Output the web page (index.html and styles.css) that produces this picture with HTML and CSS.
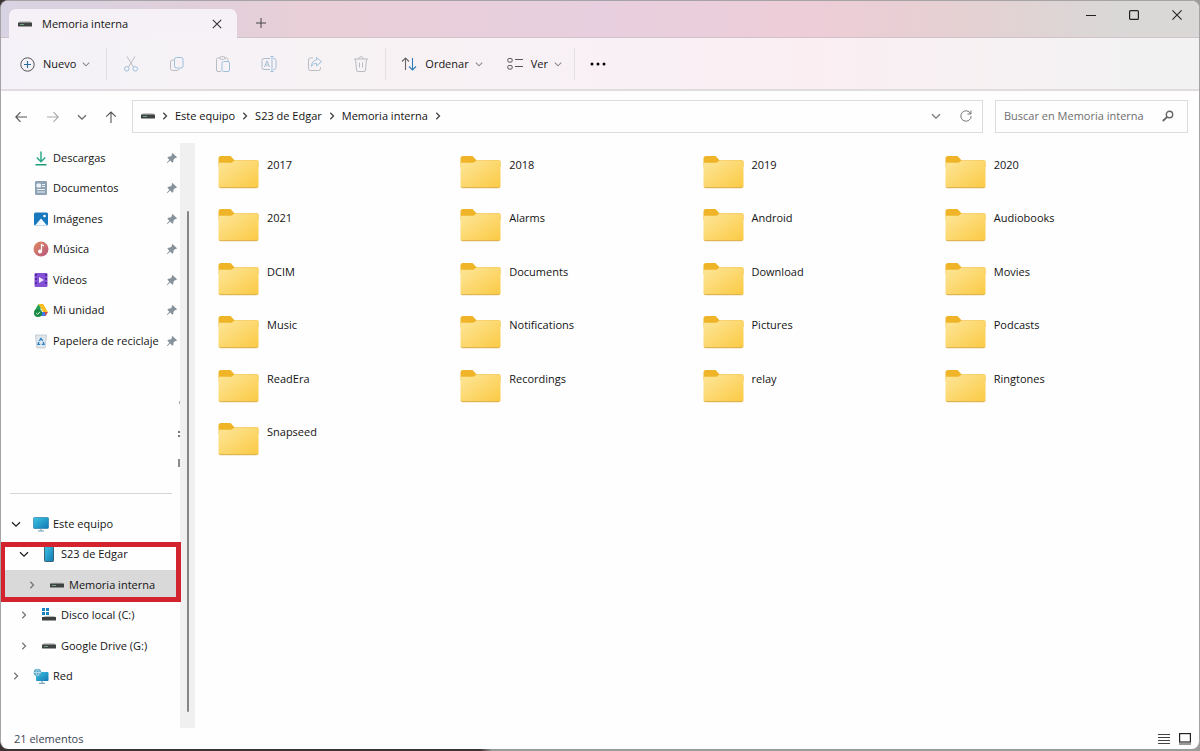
FILE: index.html
```html
<!DOCTYPE html>
<html lang="es">
<head>
<meta charset="utf-8">
<title>Memoria interna</title>
<link rel="stylesheet" href="styles.css">
</head>
<body>
<svg class="defs" aria-hidden="true">
  <defs>
    <linearGradient id="g-folder" x1="0" y1="0" x2="1" y2="1"><stop offset="0" stop-color="#fde69a"/><stop offset="1" stop-color="#fbca44"/></linearGradient>
    <linearGradient id="g-screen" x1="0" y1="0" x2="1" y2="1"><stop offset="0" stop-color="#3cc5e2"/><stop offset="1" stop-color="#1278b4"/></linearGradient>
    <linearGradient id="g-music" x1="0" y1="0" x2="1" y2="1"><stop offset="0" stop-color="#e08a60"/><stop offset="1" stop-color="#b8557e"/></linearGradient>
    <symbol id="folder" viewBox="0 0 41 34"><path d="M.5 3.500a2.500 2.500 0 0 1 2.500-2.500h9.500l4 4.200h22.500a1.500 1.500 0 0 1 1.500 1.500V12H.5z" fill="#efb427"/><path d="M.5 9a1.200 1.200 0 0 1 1.200-1.200H13c1.500 0 2.500-2.400 4-2.400h22a1.500 1.500 0 0 1 1.500 1.500V31a1.500 1.500 0 0 1-1.500 1.500H2A1.500 1.500 0 0 1 .5 31z" fill="url(#g-folder)"/><path d="M1 31.800q.4.900 1.500.9h36q1 0 1.400-.9" fill="none" stroke="#d9a83a"/></symbol>
    <symbol id="drive" viewBox="0 0 14 6"><path d="M2 0h10l2 2H0z" fill="#c9c9c9"/><rect y="1.500" width="14" height="4" rx=".6" fill="#3f4341"/><path d="M2 3.500h4" stroke="#6fa383"/></symbol>
    <symbol id="pin" viewBox="0 0 12 12"><path d="M6.500 1 11 5.300 9.800 6.200 9 6 7.500 7.800 7.300 10 6.300 10.700 4.200 8.600 1.200 11.200.8 10.800 3.400 7.800 1.400 5.700 2.200 4.800 4.400 4.600 6 3 5.700 1.800z" fill="#87929b"/></symbol>
    <symbol id="right" viewBox="0 0 8 8"><path d="M2.300.8 5.500 4 2.300 7.200" fill="none" stroke="currentColor" stroke-width="1.300"/></symbol>
    <symbol id="down" viewBox="0 0 10 10"><path d="M1 3.200 5 7.200 9 3.200" fill="none" stroke="currentColor" stroke-width="1.300"/></symbol>
  </defs>
</svg>
<div class="window">
  <header class="titlebar">
    <div class="tab">
      <svg class="i14x6"><use href="#drive"/></svg>
      <span class="tab-title">Memoria interna</span>
      <button class="icon-btn" aria-label="Cerrar pestaña"><svg width="10" height="10" viewBox="0 0 10 10"><path d="M.8.8l8.400 8.400M9.200.8.8 9.200" stroke="#333" stroke-width="1.100"/></svg></button>
    </div>
    <button class="icon-btn new-tab" aria-label="Nueva pestaña"><svg width="10" height="10" viewBox="0 0 10 10"><path d="M5 0v10M0 5h10" stroke="#444"/></svg></button>
    <div class="window-controls">
      <button class="icon-btn" aria-label="Minimizar"><svg width="10" height="10" viewBox="0 0 10 10"><path d="M0 5.500h10" stroke="#222"/></svg></button>
      <button class="icon-btn" aria-label="Maximizar"><svg width="10" height="10" viewBox="0 0 10 10"><rect x=".6" y=".6" width="8.800" height="8.800" rx="1" fill="none" stroke="#222" stroke-width="1.200"/></svg></button>
      <button class="icon-btn" aria-label="Cerrar"><svg width="10" height="10" viewBox="0 0 10 10"><path d="M.4.4l9.200 9.200M9.600.4.400 9.600" stroke="#222" stroke-width="1.100"/></svg></button>
    </div>
  </header>

  <div class="toolbar">
    <button class="tool new"><svg width="15" height="15" viewBox="0 0 15 15" fill="none"><circle cx="7.500" cy="7.500" r="6.700" stroke="#555"/><path d="M7.500 4v7M4 7.500h7" stroke="#2c6a9a" stroke-width="1.100"/></svg><span>Nuevo</span><svg class="chev"><use href="#down"/></svg></button>
    <div class="tools">
      <button class="icon-btn" aria-label="Cortar"><svg width="16" height="16" viewBox="0 0 16 16" fill="none"><path d="M4 .5l6.500 10.500M12 .5 5.500 11" stroke="#b9bcc3"/><circle cx="3.800" cy="12.800" r="2.300" stroke="#9dc0dd"/><circle cx="12.200" cy="12.800" r="2.300" stroke="#9dc0dd"/></svg></button>
      <button class="icon-btn" aria-label="Copiar"><svg width="16" height="16" viewBox="0 0 16 16" fill="none"><path d="M5 4H3.500A2 2 0 0 0 1.500 6v6.500a2 2 0 0 0 2 2H8a2 2 0 0 0 2-1.500" stroke="#b9bcc3"/><rect x="5.500" y="1.500" width="8.500" height="10.500" rx="2" stroke="#9dc0dd"/></svg></button>
      <button class="icon-btn" aria-label="Pegar"><svg width="16" height="16" viewBox="0 0 16 16" fill="none"><path d="M5 2H3a1.500 1.500 0 0 0-1.500 1.500V14A1.500 1.500 0 0 0 3 15.500h3M10 2h1.500A1.500 1.500 0 0 1 13 3.500V5" stroke="#b9bcc3"/><rect x="5" y=".6" width="5" height="2.800" rx="1.400" stroke="#b9bcc3"/><rect x="7" y="5.500" width="7.500" height="10" rx="1.500" stroke="#9dc0dd"/></svg></button>
      <button class="icon-btn" aria-label="Cambiar nombre"><svg width="16" height="16" viewBox="0 0 16 16" fill="none"><path d="M9 2.500H3a2 2 0 0 0-2 2v7a2 2 0 0 0 2 2h6M12.500 2.500h.5a2 2 0 0 1 2 2v7a2 2 0 0 1-2 2h-.5M3.500 11 6 4.800 8.500 11M4.500 9h3" stroke="#a9bed2"/><path d="M9.500.5h3M11 .5v15M9.500 15.500h3" stroke="#9dc0dd"/></svg></button>
      <button class="icon-btn" aria-label="Compartir"><svg width="16" height="16" viewBox="0 0 16 16" fill="none"><path d="M6 2H3.500a2 2 0 0 0-2 2v8.500a2 2 0 0 0 2 2h8a2 2 0 0 0 2-2V11" stroke="#b9bcc3"/><path d="M9.500 1.500l5 4.200-5 4.200V7.500C7 7.300 5.500 8.300 4.500 10.500c0-4 2-6.200 5-6.500z" stroke="#9dc0dd" stroke-linejoin="round"/></svg></button>
      <button class="icon-btn" aria-label="Eliminar"><svg width="16" height="16" viewBox="0 0 16 16" fill="none"><path d="M1 3h14M5.500 3c0-3 5-3 5 0M2.500 3l1 11a1.500 1.500 0 0 0 1.500 1.500h6a1.500 1.500 0 0 0 1.500-1.500l1-11M6.500 6.500v5M9.500 6.500v5" stroke="#b9bcc3"/></svg></button>
    </div>
    <button class="tool sort"><svg width="16" height="14" viewBox="0 0 16 14" fill="none"><path d="M4.500 13V1M1 4.500 4.500 1 8 4.500" stroke="#666" stroke-width="1.100"/><path d="M11.500 1v12M8 9.500l3.500 3.500L15 9.500" stroke="#2e7db8" stroke-width="1.100"/></svg><span>Ordenar</span><svg class="chev"><use href="#down"/></svg></button>
    <button class="tool"><svg width="16" height="14" viewBox="0 0 16 14" fill="none" stroke="#555"><rect x=".8" y="1.500" width="4.400" height="3.600" rx="1.300"/><rect x=".8" y="8.500" width="4.400" height="3.600" rx="1.300"/><path d="M8 2.500h8M8 9.500h8"/></svg><span>Ver</span><svg class="chev"><use href="#down"/></svg></button>
    <button class="icon-btn more" aria-label="Ver más"><svg width="16" height="4" viewBox="0 0 16 4"><circle cx="2" cy="2" r="1.500"/><circle cx="8" cy="2" r="1.500"/><circle cx="14" cy="2" r="1.500"/></svg></button>
  </div>

  <div class="navbar">
    <div class="history">
      <button class="icon-btn" aria-label="Atrás"><svg width="12" height="12" viewBox="0 0 12 12" fill="none"><path d="M12 6H1M5.500 1.200.8 6l4.700 4.800" stroke="#555" stroke-width="1.100"/></svg></button>
      <button class="icon-btn" aria-label="Adelante"><svg width="12" height="12" viewBox="0 0 12 12" fill="none"><path d="M0 6h11M6.500 1.200 11.200 6l-4.700 4.800" stroke="#aaa" stroke-width="1.100"/></svg></button>
      <button class="icon-btn" aria-label="Recientes"><svg width="10" height="10" color="#666"><use href="#down"/></svg></button>
      <button class="icon-btn" aria-label="Subir"><svg width="12" height="12" viewBox="0 0 12 12" fill="none"><path d="M6 12V1M1.200 5.700 6 1l4.800 4.700" stroke="#555" stroke-width="1.100"/></svg></button>
    </div>
    <nav class="address" aria-label="Ruta">
      <svg class="i14x6"><use href="#drive"/></svg>
      <svg class="sep"><use href="#right"/></svg>
      <a href="#">Este equipo</a>
      <svg class="sep"><use href="#right"/></svg>
      <a href="#">S23 de Edgar</a>
      <svg class="sep"><use href="#right"/></svg>
      <a href="#">Memoria interna</a>
      <svg class="sep"><use href="#right"/></svg>
      <button class="icon-btn drop" aria-label="Ubicaciones anteriores"><svg width="10" height="10" color="#777"><use href="#down"/></svg></button>
      <button class="icon-btn" aria-label="Actualizar"><svg width="12" height="12" viewBox="0 0 12 12" fill="none" stroke="#777"><path d="M10.800 4A5.200 5.200 0 1 0 11.200 6M11 .5V4H7.500"/></svg></button>
    </nav>
    <label class="search">
      <input type="text" placeholder="Buscar en Memoria interna" aria-label="Buscar en Memoria interna">
      <svg width="12" height="12" viewBox="0 0 12 12" fill="none" stroke="#666"><circle cx="7.500" cy="4.500" r="3.200" stroke-width="1.400"/><path d="M5.200 6.800.8 11" stroke-width="1.800"/></svg>
    </label>
  </div>

  <div class="content">
    <aside class="sidebar">
      <ul class="rows quick">
        <li><svg class="ico" viewBox="0 0 16 16" fill="none"><path d="M8 1.500v10M3.800 7.500 8 11.700l4.200-4.200" stroke="#2aa889" stroke-width="1.500"/><path d="M2.500 14.700h11" stroke="#1e9a7d" stroke-width="1.600"/></svg><a href="#">Descargas</a><svg class="pin"><use href="#pin"/></svg></li>
        <li><svg class="ico" viewBox="0 0 16 16"><rect x="2" y="1" width="12" height="14" rx="1.200" fill="#8fa2b4"/><path d="M4 4h3.500v3H4zM4 9.500h8M4 12h8M9 4.500h3M9 6.500h3" fill="#edf3f8" stroke="#edf3f8"/></svg><a href="#">Documentos</a><svg class="pin"><use href="#pin"/></svg></li>
        <li><svg class="ico" viewBox="0 0 16 16"><rect x="1" y="1.500" width="14" height="13" rx="1.500" fill="#1778be"/><path d="M2 14.500 8 7.500l6 7z" fill="#f4faff"/><circle cx="11.500" cy="5" r="1.300" fill="#fff"/></svg><a href="#">Imágenes</a><svg class="pin"><use href="#pin"/></svg></li>
        <li><svg class="ico" viewBox="0 0 16 16"><circle cx="8" cy="8" r="7.500" fill="url(#g-music)"/><circle cx="7" cy="10.500" r="2" fill="#fff"/><path d="M8.500 10.500V3.500l2.500 1.500" fill="none" stroke="#fff" stroke-width="1.200"/></svg><a href="#">Música</a><svg class="pin"><use href="#pin"/></svg></li>
        <li><svg class="ico" viewBox="0 0 16 16"><rect x="1.500" y="1" width="13" height="14" rx="1.200" fill="#8450d6"/><path d="M3 2v12M13 2v12" stroke="#41208c" stroke-width="1.500" stroke-dasharray="2 2"/><path d="M6 5v6l5-3z" fill="#f0e5ff"/></svg><a href="#">Vídeos</a><svg class="pin"><use href="#pin"/></svg></li>
        <li><svg class="ico" viewBox="0 0 16 16"><path d="M5.500 2 1.200 9.500l2.200 4L8 6z" fill="#21a05a"/><path d="M5.500 2h4.700l4.600 8h-4.600z" fill="#f8bd21"/><path d="M7 10h7.800l-2.300 4H5z" fill="#3c7be0"/><path d="M12.500 14l2.300-4h-3z" fill="#e34a3c"/><circle cx="5" cy="11" r="4" fill="#188a42"/><path d="M3.200 11l1.500 1.400L7 9.700" fill="none" stroke="#dff5e5"/></svg><a href="#">Mi unidad</a><svg class="pin"><use href="#pin"/></svg></li>
        <li><svg class="ico" viewBox="0 0 16 16"><path d="M2.500 2h11l-1.300 13H3.800z" fill="#dfe6ec" stroke="#b5c0c9" stroke-width=".7"/><path d="M6.300 8 8 5.500 9.700 8M10.300 9l.7 2.300H8.800M7.200 11.300H5l.8-2.300" fill="none" stroke="#2682c8" stroke-width="1.300"/></svg><a href="#">Papelera de reciclaje</a><svg class="pin"><use href="#pin"/></svg></li>
      </ul>
      <div class="rows clipped" aria-hidden="true">
        <div></div>
        <div><svg width="2" height="10"><path d="M1.500 4v3" stroke="#aaa"/></svg></div>
        <div><svg width="2" height="10"><path d="M1 4v2M1 8v2" stroke="#777" stroke-width="2"/></svg></div>
        <div><svg width="2" height="10"><path d="M1 1v8" stroke="#666" stroke-width="1.500"/></svg></div>
      </div>
      <hr>
      <ul class="rows tree">
        <li><svg class="arrow open"><use href="#down"/></svg><svg class="ico" viewBox="0 0 16 16"><rect x=".5" y="1.500" width="15" height="11" rx="1" fill="url(#g-screen)" stroke="#2a7fa8" stroke-width=".7"/><path d="M8 12.500V15M5 15h6" stroke="#6f9eb6"/></svg><a href="#">Este equipo</a></li>
        <li class="level1 highlight"><svg class="arrow open"><use href="#down"/></svg><svg class="ico" viewBox="0 0 16 16"><rect x="3.500" y=".5" width="9" height="15" rx=".8" fill="url(#g-screen)" stroke="#33546a" stroke-width=".9"/></svg><a href="#">S23 de Edgar</a></li>
        <li class="level2 selected"><svg class="arrow"><use href="#right"/></svg><svg class="ico" viewBox="-1 -5 16 16"><use href="#drive" width="14" height="6"/></svg><a href="#">Memoria interna</a></li>
        <li class="level1"><svg class="arrow"><use href="#right"/></svg><svg class="ico" viewBox="0 0 16 16"><path d="M1 1h3v3H1zM5 1h3v3H5zM1 5h3v3H1zM5 5h3v3H5z" fill="#1a83c4"/><path d="M4 9h9l2 1.500H2z" fill="#bbb"/><rect x="1" y="10" width="14" height="3.500" fill="#3c403f"/></svg><a href="#">Disco local (C:)</a></li>
        <li class="level1"><svg class="arrow"><use href="#right"/></svg><svg class="ico" viewBox="-1 -5 16 16"><use href="#drive" width="14" height="6"/></svg><a href="#">Google Drive (G:)</a></li>
        <li><svg class="arrow"><use href="#right"/></svg><svg class="ico" viewBox="0 0 16 16"><rect x="3" y="4" width="12.500" height="9" rx=".8" fill="url(#g-screen)"/><path d="M9 13v2M6 15.300h6" stroke="#5f94b0"/><circle cx="4.500" cy="4.500" r="3.800" fill="#5aa9c9"/><path d="M1 4.500h7M4.500 1c-2 2-2 5 0 7M4.500 1c2 2 2 5 0 7" fill="none" stroke="#d3edf5" stroke-width=".7"/></svg><a href="#">Red</a></li>
      </ul>
    </aside>
    <div class="scrollbar"><div class="thumb"></div></div>
    <main class="files">
      <a href="#"><svg><use href="#folder"/></svg><span>2017</span></a>
      <a href="#"><svg><use href="#folder"/></svg><span>2018</span></a>
      <a href="#"><svg><use href="#folder"/></svg><span>2019</span></a>
      <a href="#"><svg><use href="#folder"/></svg><span>2020</span></a>
      <a href="#"><svg><use href="#folder"/></svg><span>2021</span></a>
      <a href="#"><svg><use href="#folder"/></svg><span>Alarms</span></a>
      <a href="#"><svg><use href="#folder"/></svg><span>Android</span></a>
      <a href="#"><svg><use href="#folder"/></svg><span>Audiobooks</span></a>
      <a href="#"><svg><use href="#folder"/></svg><span>DCIM</span></a>
      <a href="#"><svg><use href="#folder"/></svg><span>Documents</span></a>
      <a href="#"><svg><use href="#folder"/></svg><span>Download</span></a>
      <a href="#"><svg><use href="#folder"/></svg><span>Movies</span></a>
      <a href="#"><svg><use href="#folder"/></svg><span>Music</span></a>
      <a href="#"><svg><use href="#folder"/></svg><span>Notifications</span></a>
      <a href="#"><svg><use href="#folder"/></svg><span>Pictures</span></a>
      <a href="#"><svg><use href="#folder"/></svg><span>Podcasts</span></a>
      <a href="#"><svg><use href="#folder"/></svg><span>ReadEra</span></a>
      <a href="#"><svg><use href="#folder"/></svg><span>Recordings</span></a>
      <a href="#"><svg><use href="#folder"/></svg><span>relay</span></a>
      <a href="#"><svg><use href="#folder"/></svg><span>Ringtones</span></a>
      <a href="#"><svg><use href="#folder"/></svg><span>Snapseed</span></a>
    </main>
  </div>

  <footer class="status">
    <span>21 elementos</span>
    <div class="views">
      <button class="icon-btn" aria-label="Detalles"><svg width="12" height="12" viewBox="0 0 12 12"><path d="M0 1.500h12M0 4.500h12M0 7.500h12M0 10.500h12" stroke="#444"/></svg></button>
      <button class="icon-btn" aria-label="Iconos grandes"><svg width="12" height="12" viewBox="0 0 12 12"><rect x=".6" y=".6" width="10.800" height="8.400" fill="#fff" stroke="#222" stroke-width="1.200"/><path d="M0 11h12" stroke="#777" stroke-width="1.500"/></svg></button>
    </div>
  </footer>
</div>
</body>
</html>
```
FILE: styles.css
```css
* { box-sizing: border-box; }

body {
  margin: 0;
  min-height: 100vh;
  display: flex;
  padding-bottom: 2px;
  background: linear-gradient(90deg, #3a3233 40%, #9c9a9a 41%);
  font: 11px/16px "Open Sans", "Noto Sans", sans-serif;
  color: #141414;
}

a { color: inherit; text-decoration: none; white-space: nowrap; }
ul { list-style: none; margin: 0; padding: 0; }
svg { display: block; flex: none; }
.defs { position: absolute; width: 0; height: 0; }

button {
  display: flex;
  align-items: center;
  justify-content: center;
  padding: 0;
  border: 0;
  background: none;
  font: inherit;
  color: inherit;
}

.icon-btn { width: 24px; height: 24px; flex: none; }
.i14x6 { width: 14px; height: 6px; }

.window {
  flex: 1;
  display: flex;
  flex-direction: column;
  background: #fefefe;
  border: 1px solid #a5a3a5;
  border-bottom: 0;
  border-radius: 8px;
  overflow: hidden;
}

.titlebar {
  display: flex;
  align-items: flex-end;
  height: 37px;
  padding-left: 8px;
  background: linear-gradient(90deg, #d8d3e2 0%, #e0cfdb 16%, #e9cfd7 26%, #e8cfdf 50%, #edcdd7 68%, #e5d0d2 80%, #d9d8d7 94%);
  box-shadow: inset 0 -1px #d2c3cb;
}

.tab {
  display: flex;
  align-items: center;
  width: 228px;
  height: 29px;
  padding: 0 8px 0 9px;
  gap: 10px;
  border-radius: 7px 7px 0 0;
  background: #f5f1f6;
}

.tab-title { flex: 1; }
.new-tab { margin: 0 0 3px 12px; }
.window-controls { display: flex; gap: 19px; margin: 0 10px 11px auto; }

.toolbar {
  display: flex;
  align-items: center;
  height: 53px;
  padding: 1px 0 0 19px;
  background: linear-gradient(90deg, #f4f2f8 0%, #f7f2f4 28%, #f8f0f5 50%, #faeef2 68%, #f6f1f2 84%, #f3f2f2 94%);
  border-bottom: 2px solid #e1dcdf;
}

.tool { height: 32px; gap: 6px; margin-right: 24px; }
.tool span { margin-left: 2px; }
.chev { width: 8px; height: 8px; color: #888; }
.new { margin-right: 16px; }
.sort { margin-left: 15px; }

.tools {
  display: flex;
  align-items: center;
  gap: 22px;
  height: 32px;
  padding: 0 12px;
  border: solid #e4dfe3;
  border-width: 0 1px;
}

.more { width: 48px; height: 32px; margin-left: -12px; border-left: 1px solid #e4dfe3; }

.navbar { display: flex; align-items: center; gap: 12px; padding: 9px 11px 10px 8px; }
.history { display: flex; gap: 5px; width: 111px; }
.history > :first-child { margin-right: 3px; }

.address, .search {
  display: flex;
  align-items: center;
  height: 33px;
  padding-bottom: 1px;
  border: 1px solid #dcdcdc;
}

.address { flex: 1; padding-left: 8px; padding-right: 4px; gap: 6px; }
.sep { width: 8px; height: 8px; color: #444; }
.drop { margin-left: auto; }
.search { width: 193px; padding-left: 8px; padding-right: 13px; }

.search input {
  flex: 1;
  min-width: 0;
  padding: 0;
  border: 0;
  outline: 0;
  background: none;
  font: inherit;
}

.search input::placeholder { color: #6e6e6e; opacity: 1; }

.content { flex: 1; display: flex; }
.sidebar { width: 179px; flex: none; }

.rows > * { display: flex; align-items: center; height: 30px; padding-bottom: 2px; }
.rows > :nth-child(odd) { height: 31px; }
.rows.clipped > :nth-child(odd) { height: 30px; }
.rows.clipped > :nth-child(even) { height: 31px; }
.clipped > * { justify-content: flex-end; }

.ico { width: 16px; height: 16px; margin-right: 4px; }
.quick > li { padding-left: 32px; padding-right: 2px; }
.pin { width: 12px; height: 12px; margin-left: auto; }

hr {
  height: 1px;
  margin: 14px 8px 15px 9px;
  border: 0;
  background: #d5d5d5;
}

.tree > li { padding-left: 11px; }
.tree > .level1 { padding-left: 19px; }
.tree > .level2 { padding-left: 27px; }
.arrow { width: 8px; height: 8px; margin-right: 13px; color: #777; }
.arrow.open { width: 10px; height: 10px; margin: 0 12px 0 -1px; color: #222; }
.selected { background: #d9d9d9; }

.highlight { position: relative; }

.highlight::after {
  content: "";
  position: absolute;
  z-index: 1;
  inset: 2px -1px -32px -1px;
  border: 5px solid #d2232f;
}

.scrollbar {
  display: flex;
  justify-content: center;
  width: 15px;
  flex: none;
  padding: 68px 0 16px;
  background: #f0f0f0;
}

.thumb { width: 2px; border-radius: 1px; background: #858585; }

.files {
  flex: 1;
  display: grid;
  grid-template-columns: repeat(4, 1fr);
  grid-template-rows: 53px 54px 53px 54px 53px 53px;
  padding: 12px 12px 0 23px;
}

.files a { display: flex; align-items: flex-start; gap: 8px; }
.files svg { width: 41px; height: 34px; }
.files span { margin-top: 2px; }

.status {
  display: flex;
  align-items: center;
  justify-content: space-between;
  height: 21px;
  padding: 0 4px 0 13px;
  color: #3c4656;
}

.status .icon-btn { width: 21px; height: 21px; }
.views { display: flex; }
```
